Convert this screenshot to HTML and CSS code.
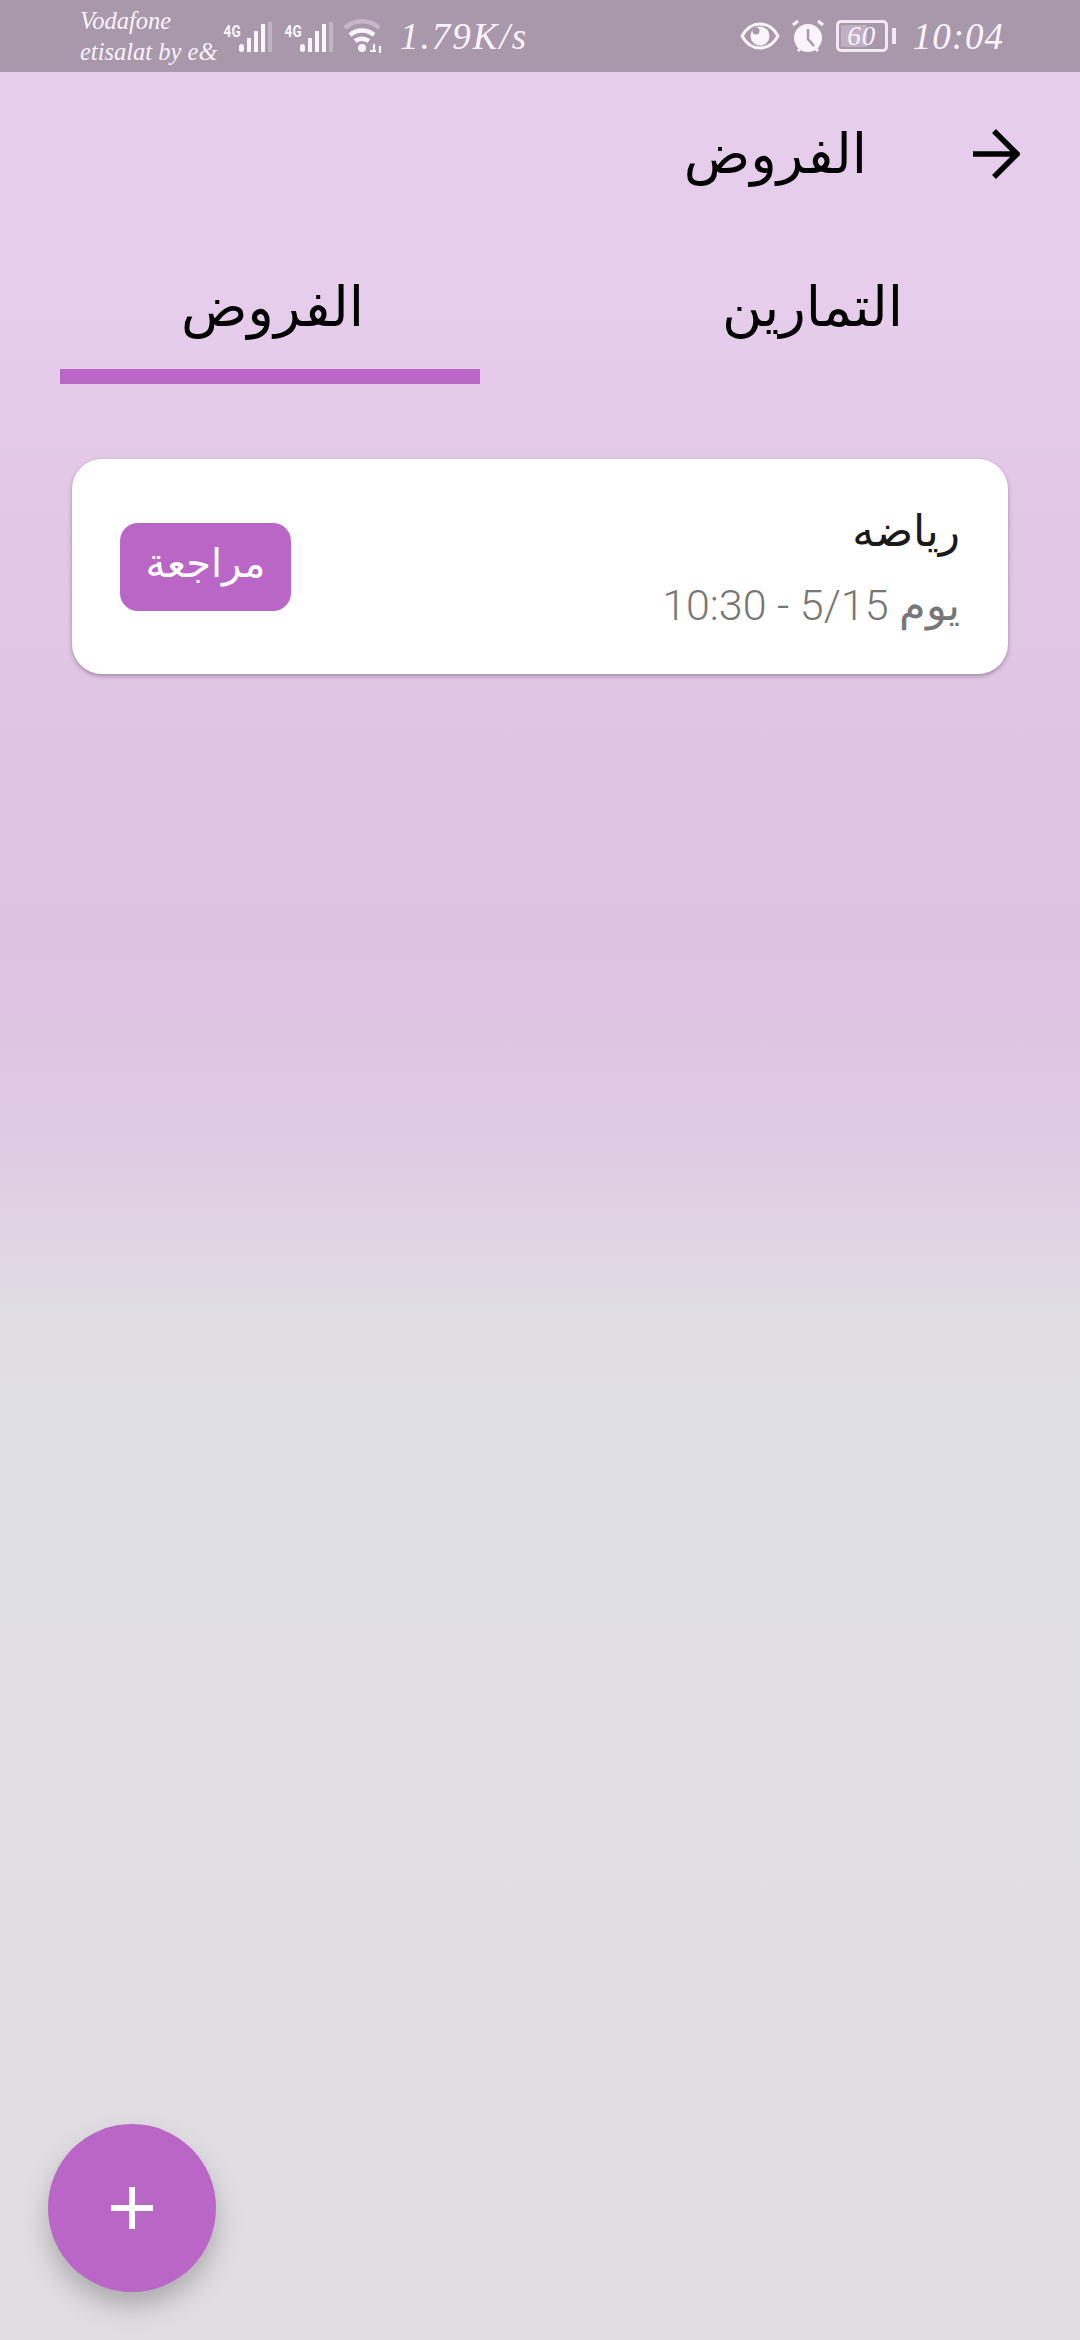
FILE: index.html
```
<!DOCTYPE html>
<html lang="ar">
<head>
<meta charset="utf-8">
<title>الفروض</title>
<link rel="stylesheet" href="styles.css">
</head>
<body>
<div class="screen">
  <header class="status" dir="ltr">
    <div class="status-left">
      <div class="carrier"><span>Vodafone</span><span>etisalat by e&amp;</span></div>
      <div class="sim">
        <span class="net">4G</span>
        <svg class="bars" width="36" height="32" viewBox="0 0 36 32"><rect x="1" y="22" width="5" height="8" rx="2.5" fill="#fbf4fc"/><rect x="9" y="16" width="4" height="14" fill="#fbf4fc"/><rect x="16" y="9" width="4" height="21" fill="#fbf4fc"/><rect x="23" y="2" width="4" height="28" fill="#fbf4fc"/><rect x="30" y="0" width="4" height="30" fill="#fbf4fc" opacity=".3"/></svg>
      </div>
      <div class="sim">
        <span class="net">4G</span>
        <svg class="bars" width="36" height="32" viewBox="0 0 36 32"><rect x="1" y="22" width="5" height="8" rx="2.5" fill="#fbf4fc"/><rect x="9" y="16" width="4" height="14" fill="#fbf4fc"/><rect x="16" y="9" width="4" height="21" fill="#fbf4fc"/><rect x="23" y="2" width="4" height="28" fill="#fbf4fc"/><rect x="30" y="0" width="4" height="30" fill="#fbf4fc" opacity=".3"/></svg>
      </div>
      <svg class="wifi" width="38" height="36" viewBox="0 0 38 36" fill="none" stroke="#fbf4fc" stroke-width="4.5"><path d="M1 10C10 1 26 1 35 10" opacity=".35"/><path d="M6 17c7-6 17-6 24 0"/><path d="M11 23c4-3 10-3 14 0"/><circle cx="18" cy="30" r="4" fill="#fbf4fc" stroke="none"/><path d="M26 33h6M30 26v8M36 28v7" stroke-width="2.2"/></svg>
      <span class="speed">1.79K/s</span>
    </div>
    <div class="status-right">
      <svg width="40" height="28" viewBox="0 0 40 28"><path d="M2 14C7 5 13 2 20 2s13 3 18 12c-5 9-11 12-18 12S7 23 2 14Z" fill="none" stroke="#fbf4fc" stroke-width="3"/><circle cx="20" cy="14" r="9.5" fill="#fbf4fc"/><circle cx="16" cy="9" r="3.5" fill="#a997ac"/></svg>
      <svg width="36" height="36" viewBox="0 0 36 36"><circle cx="18" cy="20" r="14" fill="#fbf4fc"/><path d="M18 11v10l6 7" fill="none" stroke="#a997ac" stroke-width="2.5"/><path d="M3 7l5-4M33 7l-5-4M8 33l2-2M28 33l-2-2" stroke="#fbf4fc" stroke-width="3"/></svg>
      <div class="battery">
        <div class="battery-body"><span class="battery-fill"></span><span class="battery-num">60</span></div>
        <span class="battery-tip"></span>
      </div>
      <span class="clock">10:04</span>
    </div>
  </header>

  <div class="appbar" dir="rtl">
    <svg class="back" width="50" height="50" viewBox="0 0 50 50" fill="none" stroke="#000" stroke-width="5.5"><path d="M3 25h43M24 2l23 23-23 23"/></svg>
    <h1 class="title">الفروض</h1>
  </div>

  <nav class="tabs" dir="rtl">
    <div class="tab"><span class="tab-label">التمارين</span></div>
    <div class="tab tab-active"><span class="tab-label">الفروض</span></div>
  </nav>

  <main class="list" dir="rtl">
    <article class="card">
      <div class="card-text">
        <div class="card-title">رياضه</div>
        <div class="card-sub">يوم 5/15 - 10:30</div>
      </div>
      <button class="review">مراجعة</button>
    </article>
  </main>

  <button class="fab" aria-label="add">
    <svg width="42" height="42" viewBox="0 0 42 42"><path d="M21 0v42M0 21h42" stroke="#fff" stroke-width="6"/></svg>
  </button>
</div>
</body>
</html>
```
FILE: styles.css
```
* { box-sizing: border-box; }
html, body { margin: 0; padding: 0; }
body { width: 1080px; height: 2340px; overflow: hidden; font-family: "DejaVu Sans", sans-serif; }
.screen {
  position: relative;
  width: 1080px;
  height: 2340px;
  overflow: hidden;
  background: linear-gradient(180deg, #e6cdec 0, #e6cdeb 300px, #e1c6e5 600px, #dec2e2 950px, #dfcbe3 1150px, #e0dde3 1320px, #e0dfe3 1400px, #e0dee2 2340px);
}
.status {
  height: 72px;
  background: #a997ac;
  display: flex;
  justify-content: space-between;
  align-items: center;
  padding: 0 76px 0 80px;
  color: #fbf4fc;
  font-family: "Liberation Serif", serif;
  font-style: italic;
}
.status-left { display: flex; align-items: center; }
.status-right { display: flex; align-items: center; gap: 10px; }
.carrier { display: flex; flex-direction: column; width: 142px; font-size: 24.5px; line-height: 31px; white-space: nowrap; }
.sim { display: flex; align-items: flex-start; margin-right: 9px; padding-top: 4px; }
.net { font-family: "Roboto", sans-serif; font-style: normal; font-weight: 700; font-size: 17px; line-height: 18px; transform: scaleX(.8); width: 16px; }
.bars { display: block; }
.speed { font-size: 37px; letter-spacing: 2px; margin-left: 18px; }
.battery { display: flex; align-items: center; gap: 4px; }
.battery-body { position: relative; width: 52px; height: 32px; border: 3px solid #f3e8f4; border-radius: 5px; display: flex; align-items: center; justify-content: center; }
.battery-fill { position: absolute; left: 2px; top: 2px; bottom: 2px; width: 26px; background: #bfb0c3; }
.battery-num { position: relative; font-size: 27px; letter-spacing: 1px; }
.battery-tip { width: 4px; height: 16px; background: #f3e8f4; }
.clock { font-size: 37px; letter-spacing: 1px; margin-left: 7px; }

.appbar { display: flex; align-items: center; height: 94px; padding: 0 60px 0 0; margin-top: 35px; gap: 103px; }
.back { display: block; }
.title { margin: 0; font-size: 55px; font-weight: 400; color: #000; line-height: 94px; }

.tabs { display: flex; justify-content: space-between; padding: 0 60px; margin-top: 39px; }
.tab { width: 420px; height: 144px; border-bottom: 15px solid transparent; display: flex; justify-content: center; padding-top: 32px; padding-left: 5px; }
.tab-active { border-bottom-color: #b966c7; }
.tab-label { font-size: 55px; line-height: 70px; color: #000; }

.list { padding: 75px 72px 0; }
.card {
  height: 215px;
  background: #fff;
  border-radius: 30px;
  box-shadow: 0 2px 4px rgba(90, 60, 95, .45);
  display: flex;
  justify-content: space-between;
  align-items: center;
  padding: 0 48px;
}
.card-text { display: flex; flex-direction: column; gap: 12px; }
.card-title { font-size: 44px; line-height: 64px; color: #1a1a1a; }
.card-sub { font-family: "Roboto", "DejaVu Sans", sans-serif; font-weight: 300; font-size: 43px; line-height: 60px; color: #777; }
.review {
  width: 171px;
  height: 88px;
  border: 0;
  border-radius: 18px;
  background: #b966c7;
  color: #fff;
  font-family: inherit;
  font-size: 40px;
  padding: 0 0 8px;
}
.fab {
  position: absolute;
  left: 48px;
  top: 2124px;
  width: 168px;
  height: 168px;
  border: 0;
  border-radius: 50%;
  background: #b966c7;
  box-shadow: 0 14px 24px rgba(80, 80, 80, .35);
  display: flex;
  align-items: center;
  justify-content: center;
  padding: 0;
}
```
